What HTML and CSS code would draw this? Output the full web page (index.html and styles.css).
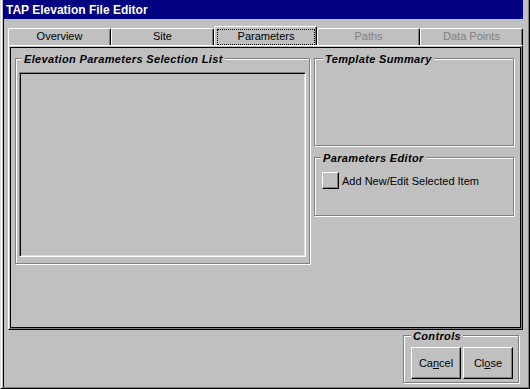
FILE: index.html
```html
<!DOCTYPE html>
<html lang="en">
<head>
    <meta charset="UTF-8">
    <meta name="viewport" content="width=device-width, initial-scale=1.0">
    <title>TAP Elevation File Editor</title>
    <link rel="stylesheet" href="styles.css">
</head>
<body>
    <div class="window">
        <div class="titlebar">TAP Elevation File Editor</div>
        <div class="client">
            <div class="tabs">
                <div class="tab">Overview</div>
                <div class="tab">Site</div>
                <div class="tab active"><span class="focus">Parameters</span></div>
                <div class="tab disabled">Paths</div>
                <div class="tab disabled">Data Points</div>
            </div>
            <div class="tab-panel">
                <div class="panel-inner">
                    <div class="group list-group">
                        <div class="group-title">Elevation Parameters Selection List</div>
                        <div class="listbox"></div>
                    </div>
                    <div class="side">
                        <div class="group summary-group">
                            <div class="group-title">Template Summary</div>
                        </div>
                        <div class="group editor-group">
                            <div class="group-title">Parameters Editor</div>
                            <div class="editor-row">
                                <button type="button" class="square-btn"></button>
                                <span>Add New/Edit Selected Item</span>
                            </div>
                        </div>
                    </div>
                </div>
            </div>
            <div class="footer">
                <div class="group controls-group">
                    <div class="group-title">Controls</div>
                    <div class="buttons">
                        <button type="button" class="btn">Ca<u>n</u>cel</button>
                        <button type="button" class="btn">Cl<u>o</u>se</button>
                    </div>
                </div>
            </div>
        </div>
    </div>
</body>
</html>
```

FILE: styles.css
```css
*{
    box-sizing: border-box;
}
body{
    margin:0;
    background-color: #c0c0c0;
    font-family: "Liberation Sans", Arial, sans-serif;
    font-size: 11px;
    color: #000;
}
.window{
    width:530px;
    height:389px;
    display: flex;
    flex-direction: column;
    border-left: 1px solid #dfdfdf;
    border-right: 1px solid #000;
    border-bottom: 1px solid #000;
    padding: 0 6px 1px 2px;
    box-shadow: inset 1px 0 0 #fff, inset -1px -1px 0 #808080;
}
.titlebar{
    height:19px;
    background-color: #000080;
    color:#fff;
    font-weight: bold;
    font-size: 12px;
    line-height: 15px;
    padding: 3px 0 0 3px;
}
.client{
    flex:1;
    display: flex;
    flex-direction: column;
    border-left: 1px solid #000;
}
.tabs{
    height:26px;
    display: flex;
    align-items: flex-end;
    padding-left: 4px;
}
.tab{
    width:103px;
    height:17px;
    border-top: 1px solid #fff;
    border-left: 1px solid #fff;
    border-right: 1px solid #000;
    border-radius: 2px 2px 0 0;
    box-shadow: inset -1px 0 0 #808080;
    text-align: center;
    line-height: 13px;
    padding-top: 1px;
}
.tab.disabled{
    color:#808080;
}
.tab.active{
    height:19px;
    padding: 2px 1px 0 2px;
}
.focus{
    display: block;
    height:100%;
    border: 1px dotted #000;
    line-height: 13px;
}
.tab-panel{
    width:515px;
    height:285px;
    margin-left: 4px;
    padding:1px;
    border-top: 1px solid #fff;
    border-left: 1px solid #fff;
    border-right: 1px solid #000;
    border-bottom: 1px solid #000;
    box-shadow: inset -1px -1px 0 #808080;
}
.panel-inner{
    height:100%;
    border:1px solid #000;
    display: flex;
    gap:4px;
    padding: 10px 6px 0 4px;
}

/* etched group frames */
.group{
    border:1px solid #808080;
    box-shadow: inset 1px 1px 0 #fff, 1px 1px 0 #fff;
}
.group-title{
    width: max-content;
    margin: -6px 0 0 3px;
    padding: 0 2px;
    background-color: #c0c0c0;
    font-weight: bold;
    font-style: italic;
    letter-spacing: 0.35px;
    line-height: 13px;
}
.summary-group .group-title{
    margin-left: 8px;
}
.editor-group .group-title{
    margin-left: -1px;
}
.controls-group .group-title{
    margin-left: 0;
}
.list-group{
    width:295px;
    height:206px;
    padding: 0 3px;
}
.listbox{
    margin-top: 6px;
    height:185px;
    border-top: 1px solid #808080;
    border-left: 1px solid #808080;
    border-right: 1px solid #fff;
    border-bottom: 1px solid #fff;
    box-shadow: inset 1px 1px 0 #000, inset -1px -1px 0 #dfdfdf;
}
.side{
    display: flex;
    flex-direction: column;
    gap:11px;
}
.summary-group{
    width:200px;
    height:88px;
}
.editor-group{
    width:200px;
    height:59px;
    padding-left: 7px;
}
.editor-row{
    display: flex;
    align-items: center;
    gap:3px;
    margin-top: 7px;
}
.square-btn{
    width:17px;
    height:17px;
    padding:0;
    background-color: #c0c0c0;
    border-top: 1px solid #fff;
    border-left: 1px solid #fff;
    border-right: 1px solid #000;
    border-bottom: 1px solid #000;
    box-shadow: inset -1px -1px 0 #808080;
}
.footer{
    display: flex;
    justify-content: flex-end;
    padding: 5px 4px 0 0;
}
.controls-group{
    width:116px;
    height:48px;
    padding: 0 5px 0 7px;
}
.buttons{
    display: flex;
    gap:2px;
    margin-top: 4px;
}
.btn{
    width:50px;
    height:32px;
    padding:0;
    font-family: "Liberation Sans", Arial, sans-serif;
    font-size: 11px;
    color:#000;
    background-color: #c0c0c0;
    border-top: 1px solid #fff;
    border-left: 1px solid #fff;
    border-right: 1px solid #000;
    border-bottom: 1px solid #000;
    box-shadow: inset -1px -1px 0 #808080;
}
```
